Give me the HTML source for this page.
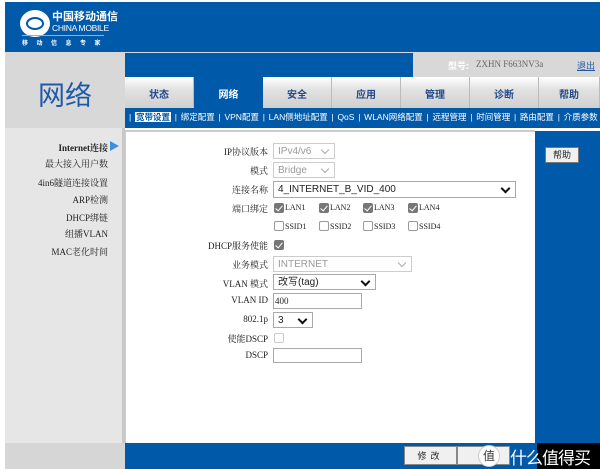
<!DOCTYPE html>
<html><head><meta charset="utf-8"><style>
*{margin:0;padding:0;box-sizing:border-box}
body{width:600px;height:469px;background:#fff;position:relative;overflow:hidden;font-family:"Liberation Serif","Noto Serif CJK SC","Noto Sans CJK SC",serif;font-size:9px;color:#222}
.a{position:absolute}
.lab{position:absolute;right:332px;text-align:right;font-size:9px;white-space:nowrap}
.sel{position:absolute;left:273px;height:16px;border:1px solid #a9a9a9;background:#fff;font-family:"Liberation Sans","Noto Sans CJK SC",sans-serif;font-size:10px;padding:1px 4px;line-height:13px}
.sel.dis{color:#999;border-color:#ccc}
.sel:after{content:"";position:absolute;right:6px;top:3px;width:5px;height:5px;border-right:2px solid #111;border-bottom:2px solid #111;transform:rotate(45deg)}
.sel.dis:after{border-color:#aaa;border-width:1px}
.sel.noarr:after{display:none}
.cb{position:absolute;width:10px;height:10px;border:1px solid #999;border-radius:2px;background:#fff}
.cb.on{background:#777;border-color:#777}
.cb.on:after{content:"";position:absolute;left:2px;top:0px;width:3px;height:6px;border-right:1.5px solid #fff;border-bottom:1.5px solid #fff;transform:rotate(40deg)}
.ct{position:absolute;font-size:8px}
.side{position:absolute;right:492px;text-align:right;font-size:9px;white-space:nowrap}
.tab{position:absolute;top:77px;height:31px;width:69px;background:linear-gradient(#fff,#e2e2e2 40%,#d0d0d0);border-right:1px solid #bbb;text-align:center;line-height:33px;font-weight:bold;font-size:10px;color:#234a8a;font-family:"Noto Sans CJK SC",sans-serif}
</style></head><body>
<div class="a" style="left:5px;top:2px;width:595px;height:50px;background:#0059a9"></div>
<div class="a" style="left:20px;top:10px;width:30px;height:27px;border-radius:50%;background:#fff"></div>
<div class="a" style="left:26px;top:17px;width:18px;height:13px;border:2px solid #0059a9;border-radius:50%"></div>
<div class="a" style="left:52px;top:10px;color:#fff;font-size:11px;font-weight:bold;font-family:'Noto Sans CJK SC',sans-serif;line-height:12px">中国移动通信</div>
<div class="a" style="left:52px;top:23px;color:#fff;font-size:8.5px;font-family:'Liberation Sans',sans-serif;letter-spacing:-0.3px">CHINA MOBILE</div>
<div class="a" style="left:22px;top:35px;width:82px;border-top:1px solid #8fb0d8"></div>
<div class="a" style="left:22px;top:38px;color:#fff;font-size:6px;font-family:'Noto Sans CJK SC',sans-serif;letter-spacing:8.5px;font-weight:bold">移动信息专家</div>
<div class="a" style="left:5px;top:52px;width:595px;height:76px;background:#d8d8d8"></div>
<div class="a" style="left:38px;top:74px;font-size:27px;color:#1f5aa7;font-family:'Noto Sans CJK SC',sans-serif">网络</div>
<div class="a" style="left:125px;top:53px;width:288px;height:24px;background:#0059a9"></div>
<div class="a" style="left:413px;top:53px;width:187px;height:24px;background:#d8d8d8"></div>
<div class="a" style="left:448px;top:59px;color:#fff;font-weight:bold;font-size:9px;font-family:'Noto Sans CJK SC',sans-serif">型号:</div>
<div class="a" style="left:476px;top:59px;color:#666;font-size:9px">ZXHN F663NV3a</div>
<div class="a" style="left:577px;top:59px;color:#1f5aa7;font-size:9px;text-decoration:underline;font-family:'Noto Sans CJK SC',sans-serif">退出</div>
<div class="a" style="left:125px;top:77px;width:475px;height:51px;background:#0059a9"></div>
<div class="tab" style="left:125px">状态</div>
<div class="a" style="left:194px;top:77px;width:69px;line-height:33px;text-align:center;color:#fff;font-weight:bold;font-size:10px;font-family:'Noto Sans CJK SC',sans-serif">网络</div>
<div class="tab" style="left:263px">安全</div>
<div class="tab" style="left:332px">应用</div>
<div class="tab" style="left:401px">管理</div>
<div class="tab" style="left:470px">诊断</div>
<div class="tab" style="left:539px;width:61px">帮助</div>
<div class="a" style="left:129px;top:111px;color:#fff;font-size:8.5px;font-family:'Liberation Sans','Noto Sans CJK SC',sans-serif;white-space:nowrap;word-spacing:1.4px">| <b style="background:#fff;color:#0059a9;padding:0 1px">宽带设置</b> | 绑定配置 | VPN配置 | LAN侧地址配置 | QoS | WLAN网络配置 | 远程管理 | 时间管理 | 路由配置 | 介质参数 |</div>
<div class="a" style="left:5px;top:128px;width:120px;height:315px;background:#e6e6e6;border-right:3px solid #c8c8c8"></div>
<div class="a" style="left:125px;top:130px;width:410px;height:313px;border-top:2px solid #ccc;border-left:1px solid #ccc"></div>
<div class="a" style="left:535px;top:131px;width:65px;height:312px;background:#0059a9"></div>
<div class="a" style="left:545px;top:147px;width:34px;height:16px;background:#f0f0f0;border:1px solid #777;text-align:center;line-height:14px;font-size:9px;font-family:'Noto Sans CJK SC',sans-serif">帮助</div>
<div class="a" style="left:0;top:443px;width:5px;height:26px;background:#fff"></div>
<div class="a" style="left:5px;top:443px;width:120px;height:26px;background:#d6d6d6"></div>
<div class="a" style="left:125px;top:443px;width:475px;height:26px;background:#0059a9"></div>
<div class="a" style="left:537px;top:443px;width:63px;height:26px;background:#000"></div>
<div class="a" style="left:404px;top:446px;width:53px;height:19px;background:#f0f0f0;border:1px solid #888;text-align:center;line-height:17px;font-size:9px;letter-spacing:4px;font-family:'Noto Sans CJK SC',sans-serif">修改</div>
<div class="a" style="left:457px;top:446px;width:53px;height:19px;background:#f0f0f0;border:1px solid #888"></div>
<div class="a" style="left:478px;top:445px;width:22px;height:22px;border-radius:50%;background:#fff;border:1px solid #ccc;text-align:center;line-height:20px;font-size:12px;color:#333;font-family:'Noto Sans CJK SC',sans-serif">值</div>
<div class="a" style="left:510px;top:444px;color:#fff;font-size:17px;font-family:'Noto Sans CJK SC',sans-serif;white-space:nowrap;letter-spacing:-1px">什么值得买</div>
<div class="side" style="top:141px;font-weight:bold">Internet连接</div>
<div class="a" style="left:110px;top:141px;width:0;height:0;border-left:9px solid #3d8ee0;border-top:5px solid transparent;border-bottom:5px solid transparent"></div>
<div class="side" style="top:157px">最大接入用户数</div>
<div class="side" style="top:176px">4in6隧道连接设置</div>
<div class="side" style="top:193px">ARP检测</div>
<div class="side" style="top:211px">DHCP绑链</div>
<div class="side" style="top:227px">组播VLAN</div>
<div class="side" style="top:245px">MAC老化时间</div>
<div class="lab" style="top:145px">IP协议版本</div><div class="sel dis" style="top:143px;width:62px">IPv4/v6</div>
<div class="lab" style="top:164px">模式</div><div class="sel dis" style="top:162px;width:62px">Bridge</div>
<div class="lab" style="top:183px">连接名称</div><div class="sel" style="top:181px;width:243px;height:17px">4_INTERNET_B_VID_400</div>
<div class="lab" style="top:202px">端口绑定</div>
<div class="cb on" style="left:274px;top:203px"></div><div class="ct" style="left:285px;top:203px">LAN1</div>
<div class="cb on" style="left:319px;top:203px"></div><div class="ct" style="left:330px;top:203px">LAN2</div>
<div class="cb on" style="left:363px;top:203px"></div><div class="ct" style="left:374px;top:203px">LAN3</div>
<div class="cb on" style="left:408px;top:203px"></div><div class="ct" style="left:419px;top:203px">LAN4</div>
<div class="cb" style="left:274px;top:221px"></div><div class="ct" style="left:285px;top:222px">SSID1</div>
<div class="cb" style="left:319px;top:221px"></div><div class="ct" style="left:330px;top:222px">SSID2</div>
<div class="cb" style="left:363px;top:221px"></div><div class="ct" style="left:374px;top:222px">SSID3</div>
<div class="cb" style="left:408px;top:221px"></div><div class="ct" style="left:419px;top:222px">SSID4</div>
<div class="lab" style="top:239px">DHCP服务使能</div><div class="cb on" style="left:274px;top:240px"></div>
<div class="lab" style="top:258px">业务模式</div><div class="sel dis" style="top:256px;width:139px">INTERNET</div>
<div class="lab" style="top:277px">VLAN 模式</div><div class="sel" style="top:274px;width:103px">改写(tag)</div>
<div class="lab" style="top:295px">VLAN ID</div><div class="sel noarr" style="top:293px;width:89px;padding-left:1px;font-size:9px;font-family:'Liberation Serif',serif">400</div>
<div class="lab" style="top:314px">802.1p</div><div class="sel" style="top:312px;width:40px">3</div>
<div class="lab" style="top:332px">使能DSCP</div><div class="cb" style="left:274px;top:333px;border-color:#ccc"></div>
<div class="lab" style="top:350px">DSCP</div><div class="a" style="left:273px;top:348px;width:89px;height:15px;border:1px solid #a9a9a9"></div>
</body></html>
